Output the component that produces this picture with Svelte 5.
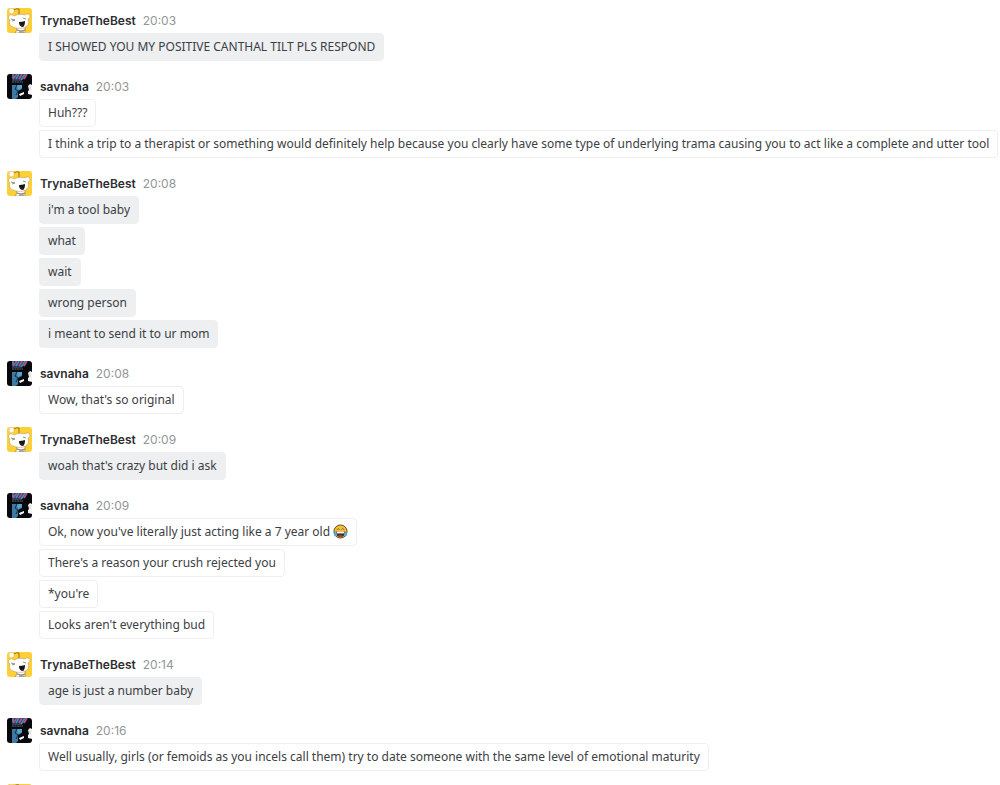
<script>
    const groups = [
        {
            user: "TrynaBeTheBest",
            time: "20:03",
            messages: ["I SHOWED YOU MY POSITIVE CANTHAL TILT PLS RESPOND"],
        },
        {
            user: "savnaha",
            time: "20:03",
            messages: [
                "Huh???",
                "I think a trip to a therapist or something would definitely help because you clearly have some type of underlying trama causing you to act like a complete and utter tool",
            ],
        },
        {
            user: "TrynaBeTheBest",
            time: "20:08",
            messages: [
                "i'm a tool baby",
                "what",
                "wait",
                "wrong person",
                "i meant to send it to ur mom",
            ],
        },
        {
            user: "savnaha",
            time: "20:08",
            messages: ["Wow, that's so original"],
        },
        {
            user: "TrynaBeTheBest",
            time: "20:09",
            messages: ["woah that's crazy but did i ask"],
        },
        {
            user: "savnaha",
            time: "20:09",
            messages: [
                "Ok, now you've literally just acting like a 7 year old",
                "There's a reason your crush rejected you",
                "*you're",
                "Looks aren't everything bud",
            ],
            laugh: 0,
        },
        {
            user: "TrynaBeTheBest",
            time: "20:14",
            messages: ["age is just a number baby"],
        },
        {
            user: "savnaha",
            time: "20:16",
            messages: [
                "Well usually, girls (or femoids as you incels call them) try to date someone with the same level of emotional maturity",
            ],
        },
        { user: "TrynaBeTheBest", messages: [] },
    ];

    const isOwn = (group) => group.user === "TrynaBeTheBest";
</script>

{#snippet snoo()}
    <svg class="avatar" viewBox="0 0 25 25" aria-hidden="true">
        <rect width="25" height="25" fill="#ffd035" />
        <path d="M7 2q3-2 5-1v6" fill="none" stroke="#8c6526" stroke-width=".9" />
        <circle cx="4.5" cy="3" r="2.5" fill="#fff" stroke="#e0c98d" stroke-width=".6" />
        <path
            d="M9 18h9v7H8l2-3z"
            fill="#fff"
            stroke="#87714a"
            stroke-width=".6"
        />
        <path
            d="M2 8c1-2 4-1 5 0 4-2 7-2 11-1 2-2 5-1 5 1s-1 3-2 3c1 3 1 5-1 7-3 3-10 3-14 1-4-1-4-5-3-7-2-1-2-3-1-4z"
            fill="#fff"
            stroke="#b59d62"
            stroke-width=".6"
        />
        <path
            d="M4 11l4 1-3 1M16 10l3 1"
            fill="none"
            stroke="#6d675c"
            stroke-width=".7"
        />
        <path d="M12 14q3 0 6-1c0 4-1 6-3 6-2-1-3-2-3-5z" fill="#171717" />
        <path d="M14 18q1-1 3 0-1 1-3 0z" fill="#59404f" />
        <path d="M10 22q4 2 8 0M12 24h5" fill="none" stroke="#574329" stroke-width=".7" />
    </svg>
{/snippet}

{#snippet poster()}
    <svg class="avatar" viewBox="0 0 25 25" aria-hidden="true">
        <rect width="25" height="25" fill="#08090d" />
        <path d="M5 0h15l-3 5-3 2H5z" fill="#263f61" />
        <path d="M10 0L6 5M15 0l-3 5M20 0l-3 5" stroke="#b74d83" stroke-width="1.8" />
        <path d="M6 0v4M12 0L9 5M18 0l-4 6" stroke="#458ab4" stroke-width="1.6" />
        <path d="M5 8h11" stroke="#85858c" stroke-width=".8" stroke-dasharray="2 .5" />
        <path d="M5 11h10v4l-4 2v6l-2 2H5z" fill="#3b7ba5" />
        <path d="M10 11h5v3l-4 2z" fill="#5aa2ca" />
        <path d="M10 11l-2 4 3 2-2 4" fill="none" stroke="#172d44" />
        <path d="M12 20l5-2v2l-4 2z" fill="#fff" />
        <path d="M21 12l2-2 2 1v10l-4-1v-3l1-1z" fill="#f4f4f4" />
        <path d="M23 12v4" stroke="#bfc1c5" stroke-width=".7" />
    </svg>
{/snippet}

{#snippet laughing()}
    <svg class="emoji" viewBox="0 0 16 16" role="img" aria-label="laughing with tears">
        <circle cx="8" cy="8" r="7" fill="#f6bd35" stroke="#5b4630" />
        <path d="M4 6l2-1 1 1M9 6l1-1 2 1" fill="none" stroke="#6b5128" stroke-width=".8" />
        <path d="M3 8h10c0 4-2 6-5 6S3 12 3 8z" fill="#49302a" />
        <path d="M4 8h8v2H4z" fill="#fff" />
        <path d="M6 13q2-2 4 0-2 1-4 0z" fill="#da5148" />
        <path d="M3 8c-2 2-3 4-1 5 2 1 3-2 1-5zM13 8c2 2 3 4 1 5-2 1-3-2-1-5z" fill="#48aee1" />
    </svg>
{/snippet}

<main>
    {#each groups as group}
        <article class:own={isOwn(group)}>
            {#if isOwn(group)}
                {@render snoo()}
            {:else}
                {@render poster()}
            {/if}
            {#if group.messages.length}
                <div class="body">
                    <header>
                        <span class="name">{group.user}</span>
                        <time>{group.time}</time>
                    </header>
                    {#each group.messages as message, i}
                        <p>
                            {message}
                            {#if group.laugh === i}
                                {@render laughing()}
                            {/if}
                        </p>
                    {/each}
                </div>
            {/if}
        </article>
    {/each}
</main>

<style>
    :global(body) {
        margin: 0;
        background: #fff;
    }

    main {
        box-sizing: border-box;
        height: 100vh;
        padding: 8px 0 0 7px;
        overflow: hidden;
        font-family: "Noto Sans", sans-serif;
        font-size: 12px;
        color: #3c4043;
    }

    article {
        display: flex;
        gap: 7px;
        margin-bottom: 13px;
    }

    .avatar {
        width: 25px;
        height: 25px;
        flex-shrink: 0;
        border-radius: 3px;
    }

    .body {
        display: flex;
        flex-direction: column;
        align-items: flex-start;
        gap: 3px;
        min-width: 0;
    }

    header {
        display: flex;
        align-items: center;
        gap: 7px;
        height: 25px;
        margin-bottom: -3px;
        padding-left: 1px;
        font-family: Inter, "Liberation Sans", sans-serif;
        font-size: 12px;
    }

    .name {
        font-weight: 600;
        color: #2b2d2f;
    }

    time {
        color: #919598;
    }

    p {
        box-sizing: border-box;
        margin: 0;
        padding: 4px 8px;
        border: 1px solid #edeff1;
        border-radius: 0 4px 4px 4px;
        line-height: 18px;
    }

    .own p {
        background: #edeff1;
    }

    .emoji {
        width: 15px;
        height: 15px;
        vertical-align: -3px;
    }
</style>
